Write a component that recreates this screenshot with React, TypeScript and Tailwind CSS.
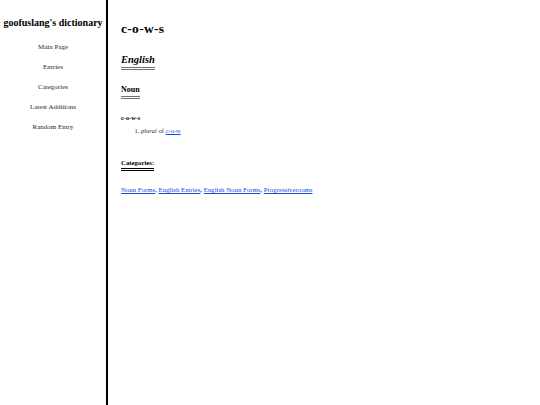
export default function App() {
  const nav = ['Main Page', 'Entries', 'Categories', 'Latest Additions', 'Random Entry'];
  return (
    <div className="flex h-[405px] w-[540px] bg-white text-black" style={{ fontFamily: '"Liberation Serif", serif' }}>
      <div className="w-[108px] shrink-0 border-r-2 border-black pt-[17px] text-center">
        <div className="text-[10px] font-bold leading-[12px] whitespace-nowrap">goofuslang's dictionary</div>
        <ul className="mt-[14px] flex flex-col gap-[11px] text-[7px] leading-[9px] text-gray-800">
          {nav.map((n) => (
            <li key={n}>{n}</li>
          ))}
        </ul>
      </div>
      <div className="flex-1 pl-[13px] pt-[21px]">
        <h1 className="text-[13.5px] font-bold leading-[16px] tracking-[0.3px]">c-o-w-s</h1>
        <h2 className="mt-[16px] inline-block border-b-[3px] border-double border-gray-500 pb-[1px] text-[10.5px] font-bold italic leading-[13px]">
          English
        </h2>
        <div>
          <h3 className="mt-[15px] inline-block border-b-[3px] border-double border-gray-500 pb-[1px] text-[8px] font-bold leading-[10px]">
            Noun
          </h3>
        </div>
        <div className="mt-[15px] text-[6.3px] font-bold leading-[8px]">c-o-w-s</div>
        <ol className="mt-[5px] list-decimal pl-[20px] text-[6.5px] leading-[8px] text-gray-800">
          <li>
            <i>plural</i> of <a className="text-blue-700 underline">c-o-w</a>
          </li>
        </ol>
        <div>
          <div className="mt-[23px] inline-block border-b-[3px] border-double border-black pb-[1px] text-[6.8px] font-bold leading-[9px]">
            Categories:
          </div>
        </div>
        <div className="mt-[14px] text-[6.8px] leading-[8px]">
          <a className="text-blue-700 underline">Noun Forms</a>, <a className="text-blue-700 underline">English Entries</a>,{' '}
          <a className="text-blue-700 underline">English Noun Forms</a>, <a className="text-blue-700 underline">Progressiverooms</a>
        </div>
      </div>
    </div>
  );
}
